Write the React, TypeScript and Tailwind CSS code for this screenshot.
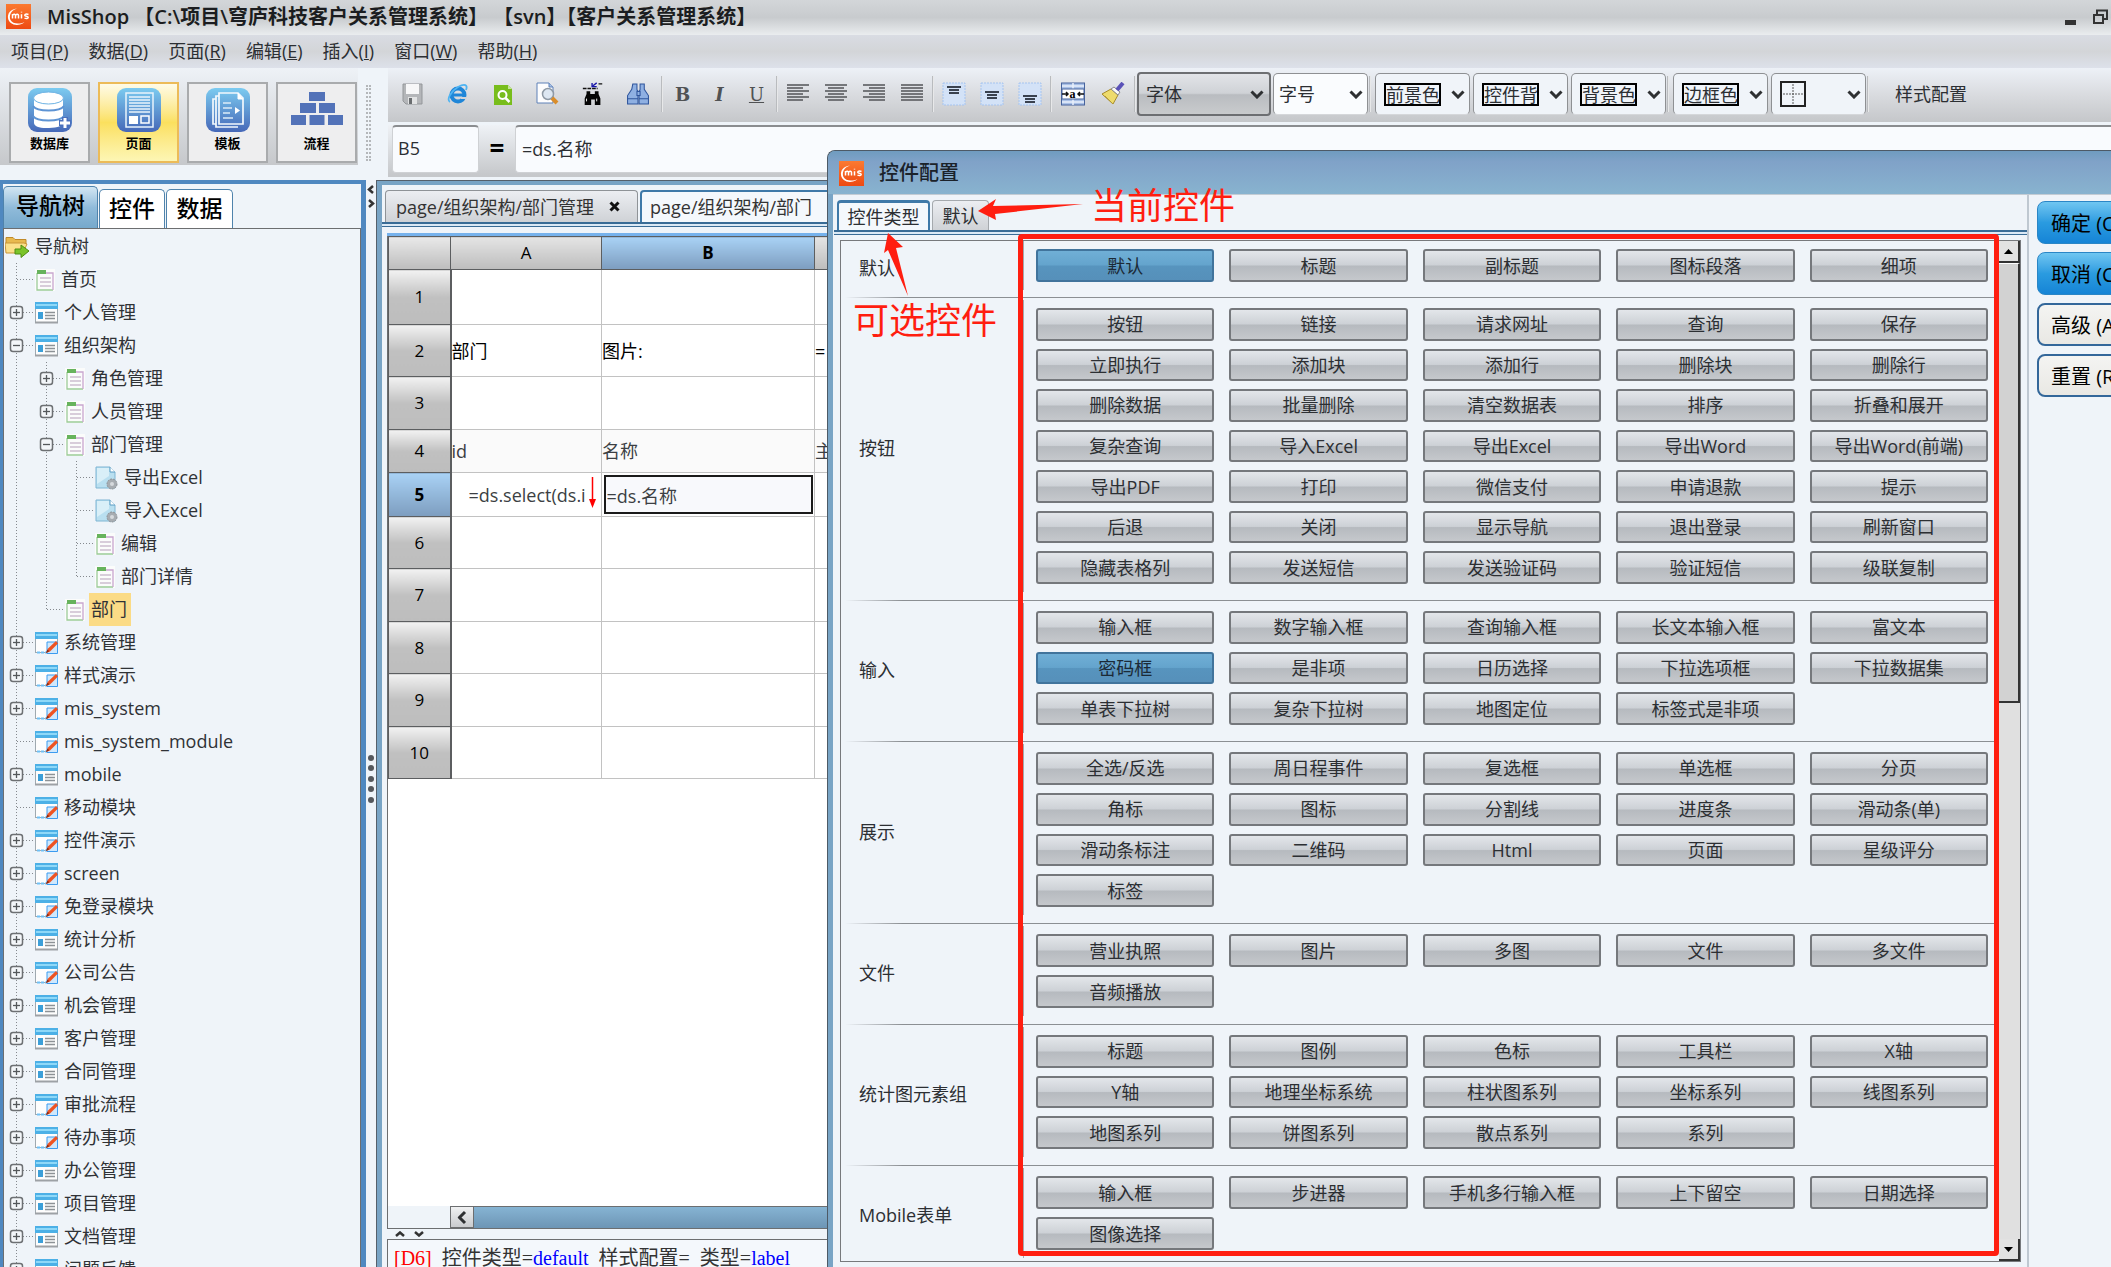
import React from 'react';
import clsx from 'clsx';

type NodeIcon = 'page' | 'panel' | 'edit' | 'action';

interface TreeNode {
    label: string;
    icon: NodeIcon;
    level: number;
    toggle?: '+' | '-';
    // Levels whose vertical guide runs through this row
    guides?: number[];
    last?: boolean;
    selected?: boolean;
}

interface ControlGroup {
    name: string;
    items: string[];
}

const TREE: TreeNode[] = [
    { label: '首页', icon: 'page', level: 1 },
    { label: '个人管理', icon: 'panel', level: 1, toggle: '+' },
    { label: '组织架构', icon: 'panel', level: 1, toggle: '-' },
    { label: '角色管理', icon: 'page', level: 2, toggle: '+', guides: [1] },
    { label: '人员管理', icon: 'page', level: 2, toggle: '+', guides: [1] },
    { label: '部门管理', icon: 'page', level: 2, toggle: '-', guides: [1] },
    { label: '导出Excel', icon: 'action', level: 3, guides: [1, 2] },
    { label: '导入Excel', icon: 'action', level: 3, guides: [1, 2] },
    { label: '编辑', icon: 'page', level: 3, guides: [1, 2] },
    { label: '部门详情', icon: 'page', level: 3, guides: [1, 2], last: true },
    { label: '部门', icon: 'page', level: 2, guides: [1], last: true, selected: true },
    { label: '系统管理', icon: 'edit', level: 1, toggle: '+' },
    { label: '样式演示', icon: 'edit', level: 1, toggle: '+' },
    { label: 'mis_system', icon: 'edit', level: 1, toggle: '+' },
    { label: 'mis_system_module', icon: 'edit', level: 1 },
    { label: 'mobile', icon: 'panel', level: 1, toggle: '+' },
    { label: '移动模块', icon: 'edit', level: 1 },
    { label: '控件演示', icon: 'edit', level: 1, toggle: '+' },
    { label: 'screen', icon: 'edit', level: 1, toggle: '+' },
    { label: '免登录模块', icon: 'edit', level: 1, toggle: '+' },
    { label: '统计分析', icon: 'panel', level: 1, toggle: '+' },
    { label: '公司公告', icon: 'edit', level: 1, toggle: '+' },
    { label: '机会管理', icon: 'panel', level: 1, toggle: '+' },
    { label: '客户管理', icon: 'panel', level: 1, toggle: '+' },
    { label: '合同管理', icon: 'panel', level: 1, toggle: '+' },
    { label: '审批流程', icon: 'edit', level: 1, toggle: '+' },
    { label: '待办事项', icon: 'edit', level: 1, toggle: '+' },
    { label: '办公管理', icon: 'panel', level: 1, toggle: '+' },
    { label: '项目管理', icon: 'panel', level: 1, toggle: '+' },
    { label: '文档管理', icon: 'panel', level: 1, toggle: '+' },
    { label: '问题反馈', icon: 'panel', level: 1, toggle: '+' },
];

const GROUPS: ControlGroup[] = [
    { name: '默认', items: ['默认', '标题', '副标题', '图标段落', '细项'] },
    {
        name: '按钮',
        items: [
            '按钮', '链接', '请求网址', '查询', '保存',
            '立即执行', '添加块', '添加行', '删除块', '删除行',
            '删除数据', '批量删除', '清空数据表', '排序', '折叠和展开',
            '复杂查询', '导入Excel', '导出Excel', '导出Word', '导出Word(前端)',
            '导出PDF', '打印', '微信支付', '申请退款', '提示',
            '后退', '关闭', '显示导航', '退出登录', '刷新窗口',
            '隐藏表格列', '发送短信', '发送验证码', '验证短信', '级联复制',
        ],
    },
    {
        name: '输入',
        items: [
            '输入框', '数字输入框', '查询输入框', '长文本输入框', '富文本',
            '密码框', '是非项', '日历选择', '下拉选项框', '下拉数据集',
            '单表下拉树', '复杂下拉树', '地图定位', '标签式是非项',
        ],
    },
    {
        name: '展示',
        items: [
            '全选/反选', '周日程事件', '复选框', '单选框', '分页',
            '角标', '图标', '分割线', '进度条', '滑动条(单)',
            '滑动条标注', '二维码', 'Html', '页面', '星级评分',
            '标签',
        ],
    },
    { name: '文件', items: ['营业执照', '图片', '多图', '文件', '多文件', '音频播放'] },
    {
        name: '统计图元素组',
        items: [
            '标题', '图例', '色标', '工具栏', 'X轴',
            'Y轴', '地理坐标系统', '柱状图系列', '坐标系列', '线图系列',
            '地图系列', '饼图系列', '散点系列', '系列',
        ],
    },
    { name: 'Mobile表单', items: ['输入框', '步进器', '手机多行输入框', '上下留空', '日期选择', '图像选择'] },
];

const ACTIVE_CONTROLS = ['默认', '密码框'];

const MENUS = [
    ['项目', 'P'],
    ['数据', 'D'],
    ['页面', 'R'],
    ['编辑', 'E'],
    ['插入', 'I'],
    ['窗口', 'W'],
    ['帮助', 'H'],
];

const SHEET_ROWS = [
    { height: 55, cells: ['', '', ''] },
    { height: 52, cells: ['部门', '图片:', '='] },
    { height: 53, cells: ['', '', ''] },
    { height: 43, cells: ['id', '名称', '主'] },
    { height: 44, cells: ['=ds.select(ds.i', '=ds.名称', ''] },
    { height: 52, cells: ['', '', ''] },
    { height: 53, cells: ['', '', ''] },
    { height: 52, cells: ['', '', ''] },
    { height: 53, cells: ['', '', ''] },
    { height: 52, cells: ['', '', ''] },
];

const MisLogo = () => (
    <svg className="w-[25px] h-[25px] shrink-0" viewBox="0 0 25 25">
        <defs>
            <linearGradient id="mis" x1="0" y1="0" x2="0" y2="1">
                <stop offset="0" stopColor="#fb7a31" />
                <stop offset="1" stopColor="#ee4a12" />
            </linearGradient>
        </defs>
        <rect width="25" height="25" fill="url(#mis)" />
        <path d="M11 4.500C4 5 1.500 10 2 14c.6 5 6 8 12 6.500 2-.5 3.500-1.500 4.500-2.500-5 2.500-12 2-14-2C2.800 12 4.500 6.500 11 4.500z" fill="#fff" />
        <path d="M6.500 14.500v-4.500M6.500 11.200c1.500-1.700 3-1.200 3 .4v2.900M9.500 11.200c1.500-1.700 3-1.200 3 .4v2.900M15.500 10.200v4.300M15.500 7.800v.6M22.500 10.500c-2-.8-4-.3-3.700.9.300 1.200 3.300.7 3.400 2 .1 1.200-2 1.400-3.700.7" fill="none" stroke="#fff" strokeWidth="1.500" />
    </svg>
);

const RootIcon = () => (
    <svg className="w-6 h-6 shrink-0" viewBox="0 0 24 24">
        <path d="M1 4V2.500h7l2 2h11V9H1z" fill="#e8b94e" stroke="#c08a2a" />
        <path d="M0 8h19l3 1-4 9H1z" fill="#fbe08a" stroke="#c9953a" />
        <path d="M10 14h6v-4l8 6-8 6.500V19h-6z" fill="#7bc42a" stroke="#4f8d12" />
    </svg>
);

const TreeIcon = ({ type }: { type: NodeIcon }) => {
    if (type === 'page') {
        return (
            <svg className="w-5 h-[22px] shrink-0" viewBox="0 0 20 22">
                <rect x="0" y="0" width="20" height="22" fill="#fbfcfb" />
                <path d="M2 4v17h16" fill="none" stroke="#9ccb98" strokeWidth="1.300" />
                <path d="M18 21V4H8" fill="none" stroke="#c9a6cf" strokeWidth="1.300" />
                <rect x="2" y="1" width="9" height="4" fill="#67b35c" />
                <path d="M5 9h11M5 13h11M5 17h11" stroke="#cdbdd0" strokeWidth="1.300" />
            </svg>
        );
    }
    if (type === 'action') {
        return (
            <svg className="w-[23px] h-6 shrink-0" viewBox="0 0 23 24">
                <path d="M1 1h14l5 5v16H1z" fill="#b9dff0" stroke="#7fb5d3" />
                <path d="M2 2h12v8L2 18z" fill="#d9eff8" />
                <path d="M15 1v5h5" fill="#fff" stroke="#5a9cc4" />
                <circle cx="17" cy="18" r="5" fill="#a7acb1" stroke="#8b9095" strokeDasharray="2 1" />
                <circle cx="17" cy="18" r="2" fill="#d6dadd" />
            </svg>
        );
    }
    return (
        <svg className="w-[23px] h-[22px] shrink-0" viewBox="0 0 23 22">
            <rect x=".5" y=".5" width="22" height="20" fill="#fdfdfd" stroke="#9fa9b0" />
            <rect x="0" y="0" width="23" height="7" fill="#4cb0e6" />
            <rect x="1" y="2" width="21" height="2" fill="#8ed8f8" />
            {type === 'panel' ? (
                <>
                    <rect x="3" y="10" width="5" height="7" fill="#3c9fd8" />
                    <path d="M10 10.500h10M10 13.500h10M10 16.500h10" stroke="#8d9296" strokeWidth="1.500" />
                    <path d="M0 20.500h23" stroke="#9da1a5" strokeWidth="2" />
                </>
            ) : (
                <>
                    <path d="M2 20.500h10" stroke="#6fc0f5" strokeWidth="2" strokeDasharray="3 1" />
                    <path d="M12 10h10.500v11.500H12z" fill="#cfe8fd" stroke="#3b9bf0" />
                    <path d="M11 21l2-4.500 8-7.500 2 2.500-8 8z" fill="#ee5322" />
                    <path d="M11 21l1.500-3.500 1.800 1.800z" fill="#8a2a10" />
                </>
            )}
        </svg>
    );
};

const Guide = ({ node }: { node: TreeNode }) => (
    <svg className="w-[30px] h-[33px] shrink-0" viewBox="0 0 30 33">
        <path
            d={node.last ? 'M11.500 0V17' : 'M11.500 0V33'}
            stroke="#85898e"
            strokeDasharray="1 2"
        />
        <path d="M12 16.500H29" stroke="#85898e" strokeDasharray="1 2" />
        {node.toggle && (
            <>
                <rect x="5.500" y="10.500" width="12" height="12" rx="2.500" fill="#f3f6f9" stroke="#6d7073" strokeWidth="1.500" />
                <path d="M8 16.500h7" stroke="#55585b" strokeWidth="1.300" />
                {node.toggle === '+' && <path d="M11.500 13v7" stroke="#55585b" strokeWidth="1.300" />}
            </>
        )}
    </svg>
);

const TreeRow = ({ node }: { node: TreeNode }) => (
    <li className="flex items-center h-[33px]">
        {[1, 2].filter((l) => l < node.level).map((l) => (
            <svg key={l} className="w-[30px] h-[33px] shrink-0" viewBox="0 0 30 33">
                {node.guides?.includes(l) && (
                    <path d="M11.500 0V33" stroke="#85898e" strokeDasharray="1 2" />
                )}
            </svg>
        ))}
        <Guide node={node} />
        <TreeIcon type={node.icon} />
        <span
            className={clsx(
                'ml-1 px-[2px] h-[33px] leading-[33px] whitespace-nowrap',
                node.selected && 'bg-[#fbdb86] pr-1'
            )}
        >
            {node.label}
        </span>
    </li>
);

const Chevron = ({ className }: { className?: string }) => (
    <svg className={clsx('w-[14px] h-[9px] pointer-events-none shrink-0', className)} viewBox="0 0 14 9">
        <path d="M1.500 1.500l5.500 5.500 5.500-5.500" fill="none" stroke="#2e3032" strokeWidth="3" />
    </svg>
);

const Separator = () => <span className="w-[2px] h-9 mx-px shrink-0 bg-linear-to-r from-[#a3a6aa] to-white" />;

const ToolButton = ({ label, width, children }: { label: string; width: string; children: React.ReactNode }) => (
    <button aria-label={label} className={clsx('h-10 flex items-center justify-center shrink-0', width)}>
        {children}
    </button>
);

const Lines = ({ rows }: { rows: [number, number][] }) => (
    <svg className="w-[22px] h-[20px]" viewBox="0 0 22 20">
        {rows.map(([a, b], i) => (
            <path key={i} d={`M${a} ${1 + i * 3}H${b}`} stroke="#5a5c5f" strokeWidth="1.600" />
        ))}
    </svg>
);

const VAlign = ({ y }: { y: number }) => (
    <svg className="w-6 h-6" viewBox="0 0 24 24">
        <rect x="1" y="1" width="22" height="22" fill="#d3e2f7" stroke="#a5c4f0" strokeDasharray="2 1" />
        <path d={`M5 ${y}h14M7 ${y + 3}h10M7 ${y + 6}h10`} stroke="#3a424f" strokeWidth="2" />
    </svg>
);

const Binoculars = ({ fill, stroke }: { fill: string; stroke: string }) => (
    <g fill={fill} stroke={stroke}>
        <path d="M6 2h4v5l1 3v11H1v-8l4-6z" />
        <path d="M13 2h4v5l4 6v8H12V10l1-3z" />
        <path d="M10 9h3v4h-3zM1 16h10M12 16h9" />
    </g>
);

const ColorSelect = ({ label }: { label: string }) => (
    <label className="ml-[3px] w-[95px] h-[42px] shrink-0 flex items-center justify-between pl-2 pr-1 border border-[#8e9093] border-b-[#d5d7da] rounded-[5px] bg-[#f0f4f9]">
        <select aria-label={label} className="appearance-none w-[57px] h-[23px] leading-[20px] border-2 border-black outline-none">
            <option>{label}</option>
        </select>
        <Chevron />
    </label>
);

const IconBar = () => (
    <div className="h-[54px] pl-[2px] pb-[2px] flex items-center bg-linear-to-b from-[#edf1f7] via-[#d9dbdf] to-[#c5c7ca]">
        <ToolButton label="保存" width="w-[45px]">
            <svg className="w-[21px] h-[22px]" viewBox="0 0 21 22">
                <path d="M2 1h18v20H4l-3-3V1z" fill="#b4b6b9" stroke="#94979a" />
                <rect x="4" y="1" width="13" height="10" fill="#f7f7f8" />
                <rect x="6" y="14" width="9" height="7" fill="#e2e3e4" />
                <rect x="7" y="15" width="3" height="6" fill="#6a6d70" />
            </svg>
        </ToolButton>
        <ToolButton label="浏览" width="w-[45px]">
            <svg className="w-[22px] h-[22px]" viewBox="0 0 22 22">
                <circle cx="11" cy="12" r="6.500" fill="none" stroke="#1f86d8" strokeWidth="4" />
                <path d="M5 12h13" stroke="#1f86d8" strokeWidth="3" />
                <path d="M14 14h6v2h-6z" fill="#d2d5d9" />
                <path d="M3 19C-1 17 4 8 11 4s10-2 8 3" fill="none" stroke="#4fb4f2" strokeWidth="1.800" />
            </svg>
        </ToolButton>
        <ToolButton label="查看" width="w-[45px]">
            <svg className="w-[18px] h-[22px]" viewBox="0 0 18 22">
                <path d="M0 2h14l4 4v16H0z" fill="#78bd1c" />
                <path d="M14 2l4 4h-4z" fill="#c5e59b" />
                <circle cx="8.500" cy="12" r="4" fill="none" stroke="#fff" strokeWidth="2" />
                <path d="M11.500 15l4 4" stroke="#fff" strokeWidth="2.500" />
            </svg>
        </ToolButton>
        <ToolButton label="预览" width="w-[45px]">
            <svg className="w-[23px] h-[24px]" viewBox="0 0 23 24">
                <path d="M1 1h12l4 4v16H1z" fill="#fdfdfe" stroke="#5f81b8" />
                <path d="M13 1v4h4" fill="#a9c2e6" stroke="#5f81b8" />
                <circle cx="12" cy="12" r="5.500" fill="#dde7f2" stroke="#8f9aa6" strokeWidth="1.500" />
                <path d="M16 16l5 5" stroke="#d98d2b" strokeWidth="4" />
            </svg>
        </ToolButton>
        <ToolButton label="替换" width="w-[45px]">
            <svg className="w-6 h-6" viewBox="0 0 24 26">
                <path d="M1 7h16M18 2h5" stroke="#111" strokeWidth="1.500" strokeDasharray="4 1" />
                <path d="M16 1l-4 3M11 1v4h5" fill="none" stroke="#1714a8" strokeWidth="1.500" />
                <path d="M5 10h4v3h5v-3h4v3l2 5v7h-6v-6h-4v6H3v-7l2-5z" fill="#050505" />
                <path d="M5 18v3M16 18v3" stroke="#fff" />
            </svg>
        </ToolButton>
        <ToolButton label="查找" width="w-[45px]">
            <svg className="w-6 h-6" viewBox="0 0 22 23">
                <Binoculars fill="#8fb0e2" stroke="#2f559c" />
            </svg>
        </ToolButton>
        <Separator />
        <ToolButton label="加粗" width="w-[37px]">
            <span className="font-['DejaVu_Serif',serif] font-bold text-[18px] text-[#505254]">B</span>
        </ToolButton>
        <ToolButton label="斜体" width="w-[37px]">
            <span className="font-['DejaVu_Serif',serif] italic font-bold text-[18px] text-[#505254]">I</span>
        </ToolButton>
        <ToolButton label="下划线" width="w-[37px]">
            <span className="font-['DejaVu_Serif',serif] underline text-[18px] text-[#505254]">U</span>
        </ToolButton>
        <Separator />
        <ToolButton label="左对齐" width="w-[38px]">
            <Lines rows={[[0, 22], [0, 16], [0, 22], [0, 16], [0, 22], [0, 16]]} />
        </ToolButton>
        <ToolButton label="居中" width="w-[38px]">
            <Lines rows={[[0, 22], [3, 19], [0, 22], [3, 19], [0, 22], [3, 19]]} />
        </ToolButton>
        <ToolButton label="右对齐" width="w-[38px]">
            <Lines rows={[[0, 22], [6, 22], [0, 22], [6, 22], [0, 22], [6, 22]]} />
        </ToolButton>
        <ToolButton label="两端对齐" width="w-[38px]">
            <Lines rows={[[0, 22], [0, 22], [0, 22], [0, 22], [0, 22], [0, 22]]} />
        </ToolButton>
        <Separator />
        <ToolButton label="顶端对齐" width="w-[38px]"><VAlign y={5} /></ToolButton>
        <ToolButton label="垂直居中" width="w-[38px]"><VAlign y={10} /></ToolButton>
        <ToolButton label="底端对齐" width="w-[38px]"><VAlign y={14} /></ToolButton>
        <Separator />
        <ToolButton label="合并单元格" width="w-10">
            <svg className="w-6 h-6" viewBox="0 0 24 24">
                <rect x=".5" y="1" width="23" height="22" fill="#a9c0e6" stroke="#47639c" />
                <path d="M1 4h22M12 1v6M1 20h22M12 17v6" stroke="#e9f0fb" strokeWidth="1.500" />
                <rect x="1" y="7" width="22" height="10" fill="#fff" stroke="#47639c" />
                <path d="M1 12h6M5 10l2 2-2 2M23 12h-6M19 10l-2 2 2 2" fill="none" stroke="#111" strokeWidth="1.500" />
                <text x="8.500" y="15.500" fontSize="12" fontWeight="bold" fontFamily="Liberation Serif, serif">a</text>
            </svg>
        </ToolButton>
        <ToolButton label="格式刷" width="w-10">
            <svg className="w-6 h-6" viewBox="0 0 24 24">
                <path d="M1 12l9-5 7 6-5 9z" fill="#eedb6c" stroke="#a68a2a" />
                <path d="M10 7l3-2 6 5-2 3z" fill="#fafafa" stroke="#8b8b8b" />
                <path d="M16 8l6-7" stroke="#5a52b8" strokeWidth="4" />
                <path d="M4 14l8 8" stroke="#b39a35" />
            </svg>
        </ToolButton>
        <Separator />
        <label className="w-[134px] h-11 shrink-0 flex items-center pr-[5px] border-2 border-[#6d6f72] rounded-[4px] bg-[linear-gradient(#e2e4e8,#cfd2d6_48%,#b9bcc0_52%,#c9cbcd)]">
            <select aria-label="字体" className="appearance-none flex-1 min-w-0 h-full pl-[7px] leading-6 outline-none">
                <option>字体</option>
            </select>
            <Chevron />
        </label>
        <label className="ml-[2px] w-[95px] h-[42px] shrink-0 flex items-center pr-1 border border-[#8e9093] border-b-[#d5d7da] rounded-[5px] bg-[#fafcfe]">
            <select aria-label="字号" className="appearance-none flex-1 min-w-0 h-full pl-[5px] leading-6 outline-none">
                <option>字号</option>
            </select>
            <Chevron />
        </label>
        <Separator />
        <ColorSelect label="前景色" />
        <ColorSelect label="控件背景色" />
        <ColorSelect label="背景色" />
        <Separator />
        <ColorSelect label="边框色" />
        <button aria-label="边框" className="ml-[3px] w-[95px] h-[42px] shrink-0 pr-1 pl-2 flex items-center justify-between border border-[#8e9093] border-b-[#d5d7da] rounded-[5px] bg-[#f0f4f9]">
            <svg className="w-[26px] h-[26px]" viewBox="0 0 26 26">
                <rect x="1" y="1" width="24" height="24" fill="none" stroke="#222" strokeWidth="2" />
                <path d="M13 3v21M3 13h21" stroke="#555" strokeDasharray="2 1" />
            </svg>
            <Chevron />
        </button>
        <Separator />
        <button className="ml-[25px] leading-6 whitespace-nowrap">样式配置</button>
    </div>
);

const ModuleButton = ({ label, active, children }: { label: string; active?: boolean; children: React.ReactNode }) => (
    <button
        className={clsx(
            'w-[81px] h-[81px] pb-1 flex flex-col items-center justify-center gap-px border-2 text-[13px] leading-5 font-bold text-black',
            active
                ? 'border-[#ecbb58] bg-linear-to-b from-[#fffbe6] via-[#fbe05e] to-[#fdf6b4]'
                : 'border-[#a9abad] bg-[#eeeeef]'
        )}
    >
        <svg className="w-11 h-11 overflow-visible" viewBox="0 0 44 44">
            <defs>
                <linearGradient id="tile" x1="0" y1="0" x2="0" y2="1">
                    <stop offset="0" stopColor="#7ccbf0" />
                    <stop offset="1" stopColor="#4668b8" />
                </linearGradient>
            </defs>
            {children}
        </svg>
        {label}
    </button>
);

const ModuleBar = () => (
    <div className="w-[358px] shrink-0 h-[97px] pl-[9px] flex items-center gap-2 pt-[14px] pb-[2px] bg-linear-to-b from-[#eef2f7] to-[#c6c8cb]">
        <ModuleButton label="数据库">
            <rect width="44" height="44" rx="9" fill="url(#tile)" />
            <path d="M6 10v25c0 3 5 5 12 5 8 0 17-1 17-5V10z" fill="#fff" />
            <ellipse cx="20.500" cy="10" rx="15" ry="6" fill="#fff" stroke="#6db3e4" />
            <path d="M5 18c4 6 27 6 31 0M5 28c4 6 27 6 31 0" fill="none" stroke="#5e94d4" strokeWidth="2" />
            <path d="M37 29v12M31 35h12" stroke="#4a70bd" strokeWidth="6" />
            <path d="M37 30v10M32 35h10" stroke="#fff" strokeWidth="3" />
        </ModuleButton>
        <ModuleButton label="页面" active>
            <rect width="44" height="44" rx="9" fill="url(#tile)" />
            <rect x="9" y="5" width="27" height="34" fill="none" stroke="#e9f3fc" strokeWidth="1.500" />
            <path d="M12 9h21M12 12h21M12 15h21M12 18h21M12 21h21M12 24h21" stroke="#e9f3fc" strokeWidth="1.500" />
            <rect x="12" y="28" width="9" height="8" fill="#fff" />
            <rect x="24" y="28" width="8" height="7" fill="none" stroke="#fff" strokeWidth="1.500" />
        </ModuleButton>
        <ModuleButton label="模板">
            <rect width="44" height="44" rx="9" fill="url(#tile)" />
            <path d="M13 5h19l5 5v26H13zM13 8H10v31h22M10 11H7v25h3" fill="none" stroke="#f2f8fd" strokeWidth="1.700" />
            <path d="M32 5v6h5" fill="#fff" stroke="#fff" />
            <path d="M17 15h8M17 20h9M17 25h7M17 30h10" stroke="#dcebf8" strokeWidth="1.300" />
            <path d="M29 19l5 3.500-5 3.500z" fill="#fff" />
        </ModuleButton>
        <ModuleButton label="流程">
            <g fill="#5272b8">
                <path d="M14 4h16v9H14zM5 15h16v10H5zM24 15h16v10H24z" />
                <path d="M-4 27h15v10H-4zM14.500 27h15v10h-15zM33 27h15v10H33z" />
            </g>
        </ModuleButton>
    </div>
);

const Sidebar = () => (
    <aside className="w-[366px] shrink-0 flex flex-col border-l-[3px] border-r-[5px] border-t-[4px] border-[#4f88c0] bg-[#eff4f9]">
        <div className="h-11 shrink-0 flex items-end gap-px text-[23px] leading-7 font-medium text-black">
            <button className="w-[95px] h-[42px] pb-[6px] rounded-t-[5px] border border-b-0 border-[#4f83ac] bg-linear-to-b from-[#d3e6f3] via-[#90bbda] to-[#76a9cc]">导航树</button>
            <button className="w-[66px] h-[39px] pb-[2px] rounded-t-[5px] border border-b-0 border-[#4f83ac] bg-white">控件</button>
            <button className="w-[67px] h-[39px] pb-[2px] rounded-t-[5px] border border-b-0 border-[#4f83ac] bg-white">数据</button>
        </div>
        <ul className="flex-1 min-h-0 overflow-hidden pl-px pt-px border border-[#6c6e70] border-b-0 text-[18px] text-[#2f3236]">
            <li className="flex items-center h-[33px]">
                <RootIcon />
                <span className="ml-[6px] leading-[33px]">导航树</span>
            </li>
            {TREE.map((node) => (
                <TreeRow key={node.label} node={node} />
            ))}
        </ul>
    </aside>
);

const Splitter = () => (
    <div className="w-[10px] shrink-0 flex flex-col items-center justify-between pt-[5px] pb-[464px]">
        <svg className="w-2 h-6" viewBox="0 0 8 24">
            <path d="M6 1L2 4.500 6 8M2 15l4 3.500L2 22" fill="none" stroke="#333" strokeWidth="2.500" />
        </svg>
        <svg className="w-[6px] h-12" viewBox="0 0 6 48">
            {[3, 13, 24, 34, 45].map((y) => (
                <circle key={y} cx="3" cy={y} r="3" fill="#55585c" />
            ))}
        </svg>
    </div>
);

const Sheet = () => (
    <table className="table-fixed border-collapse w-full text-[18px] leading-6 text-[#3c3f43]">
        <colgroup>
            <col className="w-[62px]" />
            <col className="w-[151px]" />
            <col className="w-[213px]" />
            <col />
        </colgroup>
        <thead>
            <tr className="h-[33px] text-[17px] text-black">
                <th className="border border-[#5c5e60] bg-linear-to-b from-[#e9e9e9] to-[#bdbdbd]" />
                <th className="border border-[#5c5e60] font-normal bg-linear-to-b from-[#e4e4e4] to-[#bdbdbd]">A</th>
                <th className="border border-[#5c5e60] font-bold bg-linear-to-b from-[#a9d2f5] to-[#7d9dbf]">B</th>
                <th className="border border-[#5c5e60] bg-linear-to-b from-[#e4e4e4] to-[#bdbdbd]" />
            </tr>
        </thead>
        <tbody>
            {SHEET_ROWS.map((row, i) => (
                <tr key={i} style={{ height: row.height }} className={clsx(i === 3 && 'bg-[#fafafa]')}>
                    <th
                        className={clsx(
                            'border border-r-2 border-[#5c5e60] text-[17px] text-black bg-linear-to-b',
                            i === 4 ? 'font-bold from-[#a9d2f5] to-[#7d9dbf]' : 'font-normal from-[#f2f2f2] via-[#c0c0c0] to-[#bdbdbd]'
                        )}
                    >
                        {i + 1}
                    </th>
                    {row.cells.map((text, c) => (
                        <td
                            key={c}
                            className={clsx(
                                'relative border border-[#c2c2c2] whitespace-nowrap overflow-hidden',
                                i === 1 && 'text-black',
                                i === 4 && c === 0 && 'pl-[17px]'
                            )}
                        >
                            {i === 4 && c === 1 ? (
                                <input
                                    aria-label="B5"
                                    defaultValue={text}
                                    className="block w-[209px] h-[39px] mx-auto px-px border-2 border-[#1a1a1a] bg-[#f8f9fc] outline-none"
                                />
                            ) : (
                                text
                            )}
                            {i === 4 && c === 0 && (
                                <svg className="absolute right-1 top-1 w-[9px] h-8" viewBox="0 0 9 32">
                                    <path d="M4.500 0v24" stroke="#f00" strokeWidth="1.500" />
                                    <path d="M1 22h7l-3.500 9z" fill="#f00" />
                                </svg>
                            )}
                        </td>
                    ))}
                </tr>
            ))}
        </tbody>
    </table>
);

const Editor = () => (
    <main className="flex-1 min-w-0 flex flex-col border-l border-t border-[#55606b]">
        <div className="flex-1 min-h-0 flex flex-col border-l-[5px] border-t-[4px] border-[#78a4c5] bg-[#eff4f9]">
            <div className="mt-[5px] ml-[3px] flex gap-[2px] h-8 text-[18px] leading-6 text-[#333] shrink-0">
                <div className="w-[253px] flex items-center justify-between pl-[10px] pr-[17px] border border-b-0 border-[#8f9397] rounded-t-[4px] bg-linear-to-b from-[#eceef2] to-[#cfd2d6] whitespace-nowrap">
                    page/组织架构/部门管理
                    <button aria-label="关闭" className="w-[11px] h-[11px]">
                        <svg viewBox="0 0 11 11">
                            <path d="M1.500 1.500l8 8M9.500 1.500l-8 8" stroke="#111" strokeWidth="3" />
                        </svg>
                    </button>
                </div>
                <div className="w-[253px] flex items-center pl-[8px] border-2 border-b-0 border-[#3f79a8] rounded-t-[4px] bg-[#f4f8fc]">
                    page/组织架构/部门
                </div>
            </div>
            <div className="h-[5px] shrink-0 border-t-2 border-b border-[#396c96] bg-[#dbe9f5]" />
            <div className="flex-1 min-h-0 ml-[5px] mt-[6px] flex flex-col">
                <div className="h-[3px] shrink-0 bg-[#76b2ec]" />
                <div className="flex-1 min-h-0 overflow-hidden border-l border-b border-[#6c6e70] flex flex-col">
                    <div className="flex-1 min-h-0 bg-white">
                        <Sheet />
                    </div>
                    <div className="h-[22px] shrink-0 pl-[62px] flex">
                        <button aria-label="向左滚动" className="w-6 flex items-center justify-center border border-[#6c6e70] bg-linear-to-b from-[#f0f1f2] to-[#c9cbce]">
                            <Chevron className="rotate-90" />
                        </button>
                        <div className="flex-1 border-t border-[#6c6e70] bg-linear-to-b from-[#86b4d3] to-[#6d95b5]" />
                    </div>
                </div>
                <div className="h-[10px] shrink-0 flex items-center gap-2 pl-2">
                    <svg className="w-[30px] h-[6px]" viewBox="0 0 30 6">
                        <path d="M1 5l4-3.500L9 5M20 1l4 3.500L28 1" fill="none" stroke="#333" strokeWidth="2.500" />
                    </svg>
                </div>
                <div className="h-7 shrink-0 overflow-hidden pl-[6px] border-l border-t border-[#6c6e70] bg-[#f4f8fc] font-['Liberation_Serif','Noto_Sans_CJK_SC',serif] text-[20px] leading-9 text-[#333] whitespace-pre">
                    <span className="text-[#ff0000]">[D6]</span>
                    {'  控件类型='}
                    <span className="text-[#0000ff]">default</span>
                    {'  样式配置=  类型='}
                    <span className="text-[#0000ff]">label</span>
                </div>
            </div>
        </div>
    </main>
);

const ControlGroupRow = ({ group, first }: { group: ControlGroup; first: boolean }) => {
    const rows = Math.ceil(group.items.length / 5);
    return (
        <>
            {!first && <div className="h-px shrink-0 mx-1 bg-linear-to-r from-transparent via-[#8b8f93] via-5% to-[#8b8f93]" />}
            <section className={clsx('flex shrink-0', first ? 'pt-2 pb-[15px]' : 'pt-[10px] pb-4')}>
                <h3 className="w-[182px] shrink-0 pl-[18px] pt-[5px] flex items-center">{group.name}</h3>
                <div className="w-px -my-2 bg-[#a5a9ad]" />
                <div
                    className="flex-1 grid grid-cols-5 auto-rows-fr gap-x-[15px] gap-y-2 pl-3 pr-[11px]"
                    style={{ height: Math.floor(rows * 40.500) - 7 }}
                >
                    {group.items.map((item) => (
                        <button
                            key={item}
                            className={clsx(
                                'min-h-0 leading-6 whitespace-nowrap rounded-[3px] border-2 flex items-center justify-center',
                                ACTIVE_CONTROLS.includes(item)
                                    ? 'border-[#41749c] bg-[linear-gradient(#70afd6,#64a4cd_48%,#5794be_52%,#5690ba)] text-[#1c2a36]'
                                    : 'border-[#75787c] bg-[linear-gradient(#e3e6ea,#cdd1d6_48%,#b6babf_52%,#c5c8cc)]'
                            )}
                        >
                            {item}
                        </button>
                    ))}
                </div>
            </section>
        </>
    );
};

const ScrollButton = ({ up }: { up?: boolean }) => (
    <button
        aria-label={up ? '向上滚动' : '向下滚动'}
        className="h-[22px] shrink-0 flex items-center justify-center bg-[#e2e2e2] border-r-2 border-b-2 border-[#333] text-black"
    >
        <svg className="w-[9px] h-[5px]" viewBox="0 0 9 5">
            <path d={up ? 'M0 5l4.500-5L9 5z' : 'M0 0h9L4.500 5z'} fill="currentColor" />
        </svg>
    </button>
);

const ControlDialog = () => (
    <div
        role="dialog"
        aria-label="控件配置"
        className="absolute left-[827px] top-[150px] right-0 bottom-0 flex flex-col border-l border-t border-[#4d5a66] rounded-tl-[8px] overflow-hidden bg-[#78a4c5] text-[18px] text-[#2c2f33]"
    >
        <header className="h-[43px] shrink-0 pl-[11px] pt-px flex items-center gap-[15px] bg-linear-to-b from-[#6f9cbf] via-[#80a2c8] via-25% to-[#88b3cf]">
            <MisLogo />
            <h2 className="text-[20px] leading-6 font-medium text-[#1b222a]">控件配置</h2>
        </header>
        <div className="flex-1 min-h-0 ml-[5px] flex bg-[#eff4f9] border-t border-[#c3ccd4]">
            <div className="flex-1 min-w-0 flex flex-col pt-[5px] pb-px border-r-2 border-[#bfc8d1]">
                <div className="h-[30px] shrink-0 pl-1 flex items-end gap-[2px] leading-6">
                    <button className="w-[93px] h-[30px] border-2 border-b-0 border-t-[3px] border-[#3f79a8] rounded-t-[4px] bg-[#f4f8fc]">控件类型</button>
                    <button className="w-[57px] h-[30px] border border-b-0 border-[#a5a9ad] rounded-t-[4px] bg-linear-to-b from-[#eceef2] to-[#cfd2d6]">默认</button>
                </div>
                <div className="h-[5px] shrink-0 ml-px border-t-2 border-b border-[#396c96] bg-[#dbe9f5]" />
                <div className="flex-1 min-h-0 mt-[5px] ml-[7px] mr-[6px] mb-[4px] flex border border-[#77797c]">
                    <div className="flex-1 min-w-0 flex flex-col overflow-hidden">
                        {GROUPS.map((group, i) => (
                            <ControlGroupRow key={group.name} group={group} first={i === 0} />
                        ))}
                    </div>
                    <div className="w-[21px] shrink-0 flex flex-col bg-[#e0e0e0]">
                        <ScrollButton up />
                        <div className="h-[440px] shrink-0 bg-[#d2d2d2] border-r-2 border-b-2 border-t border-[#333] border-t-white" />
                        <div className="flex-1" />
                        <ScrollButton />
                    </div>
                </div>
            </div>
            <div className="w-[82px] shrink-0 overflow-hidden pt-[6px] pl-[8px] flex flex-col gap-2 text-[20px] leading-6 text-black">
                {['确定 (O)', '取消 (C)'].map((label) => (
                    <button key={label} className="w-[110px] h-[43px] shrink-0 pl-[13px] pt-[2px] text-left rounded-[8px] border border-[#2a86c6] bg-linear-to-b from-[#6fc6f1] via-[#2a9be0] to-[#1584d6]">
                        {label}
                    </button>
                ))}
                {['高级 (A)', '重置 (R)'].map((label) => (
                    <button key={label} className="w-[110px] h-[43px] shrink-0 pl-[12px] pt-[2px] text-left rounded-[8px] border-2 border-[#33679a] bg-linear-to-b from-[#f4f4f2] to-[#e9e8e4]">
                        {label}
                    </button>
                ))}
            </div>
        </div>
    </div>
);

// Red tutorial marks drawn over the dialog
const Annotations = () => (
    <div className="absolute inset-0 pointer-events-none text-[#ff1e10] text-[36px] leading-10">
        <div className="absolute left-[1018px] top-[234px] right-[112px] bottom-[11px] border-[5px] border-[#ff1e10] rounded-[4px]" />
        <svg className="absolute left-[870px] top-[190px] w-[220px] h-[110px]" viewBox="870 190 220 110" fill="currentColor">
            <path d="M978 211l18-12-3 7 90-2-88 10 1 6z" />
            <path d="M888 233l15 14-7 1 12 48-20-46-4 3z" />
        </svg>
        <span className="absolute left-[1091px] top-[186px]">当前控件</span>
        <span className="absolute left-[853px] top-[301px]">可选控件</span>
    </div>
);

const App: React.FC = () => {
    return (
        <div className="relative h-screen overflow-hidden flex flex-col bg-[#eff4f9] text-[18px] text-[#2c2f33] font-['Open_Sans','Noto_Sans_CJK_SC',sans-serif]">
            <header className="h-[35px] shrink-0 pl-[6px] pr-[2px] pb-[2px] flex items-center gap-4 bg-linear-to-b from-[#d3d6d9] via-[#c8cbce] to-[#eaedef]">
                <MisLogo />
                <h1 className="flex-1 text-[20px] leading-6 font-semibold text-[#1b1d20] whitespace-pre">
                    MisShop 【C:\项目\穹庐科技客户关系管理系统】 【svn】【客户关系管理系统】
                </h1>
                <button aria-label="最小化" className="w-3 h-4 flex items-end">
                    <span className="w-[11px] h-[5px] bg-[#333]" />
                </button>
                <button aria-label="还原" className="w-4">
                    <svg className="w-4 h-4" viewBox="0 0 16 16">
                        <path d="M4 5V1.500h10V10h-3" fill="none" stroke="#333" strokeWidth="2" />
                        <path d="M1 6h9v8H1z" fill="none" stroke="#333" strokeWidth="2" />
                    </svg>
                </button>
            </header>
            <nav className="h-[33px] shrink-0 pl-[11px] pb-px flex items-center gap-5 leading-6 bg-linear-to-b from-[#d9dce3] via-[#d3d5d8] to-[#dde1ea]">
                {MENUS.map(([label, key]) => (
                    <button key={key}>
                        {label}(<u>{key}</u>)
                    </button>
                ))}
            </nav>
            <div className="h-[112px] shrink-0 flex">
                <ModuleBar />
                <div className="w-[5px] h-[76px] mt-[17px] ml-2 mr-[17px] border-x-2 border-dotted border-[#b4b7ba]" />
                <div className="flex-1 min-w-0">
                    <IconBar />
                    <div className="mt-[3px] h-[52px] flex items-start border-b-2 border-[#c6c8cb] bg-linear-to-b from-[#eff2f6] to-[#c6c8cb]">
                        <input
                            aria-label="单元格"
                            defaultValue="B5"
                            className="ml-1 w-[87px] h-[48px] px-[5px] pb-[3px] border border-t-2 border-[#cfd1d4] border-t-[#8b8d90] rounded-[4px] bg-[#f9fbfe] outline-none"
                        />
                        <span className="w-9 text-center text-[26px] leading-[46px] font-bold text-black">=</span>
                        <input
                            aria-label="公式"
                            defaultValue="=ds.名称"
                            className="flex-1 h-[48px] px-[6px] pb-[3px] border border-r-0 border-t-2 border-[#cfd1d4] border-t-[#8b8d90] rounded-l-[4px] bg-[#f9fbfe] outline-none"
                        />
                    </div>
                </div>
            </div>
            <div className="flex-1 min-h-0 flex">
                <Sidebar />
                <Splitter />
                <Editor />
            </div>
            <ControlDialog />
            <Annotations />
        </div>
    );
};

export default App;
